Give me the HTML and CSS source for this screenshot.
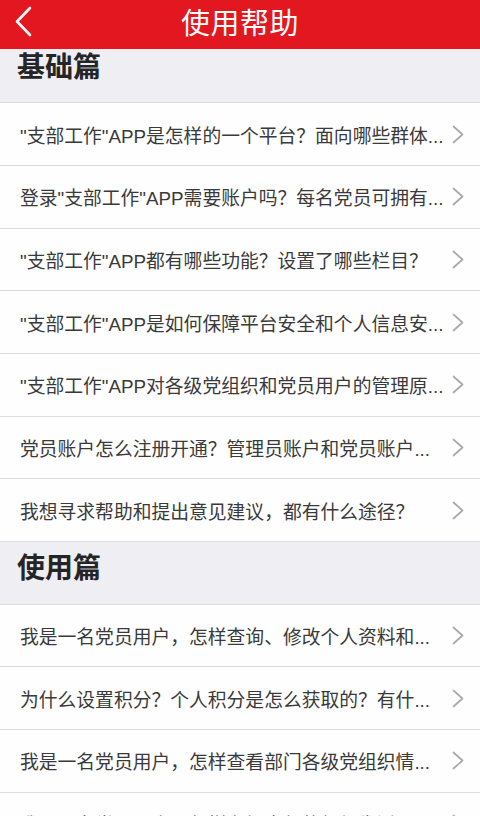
FILE: index.html
```html
<!DOCTYPE html>
<html lang="zh-CN">
<head>
<meta charset="utf-8">
<title>使用帮助</title>
<link rel="stylesheet" href="styles.css">
</head>
<body>
<div class="app">
  <header class="navbar">
    <button class="back" aria-label="返回">
      <svg width="20" height="32" viewBox="0 0 20 32"><polyline points="16,2 3,15.5 16,29" fill="none" stroke="#fff" stroke-width="2.6" stroke-linecap="round" stroke-linejoin="round"/></svg>
    </button>
    <h1 class="title">使用帮助</h1>
  </header>
  <main class="viewport">
    <div class="list">
      <div class="section">基础篇</div>
      <div class="row"><span class="text">"支部工作"APP是怎样的一个平台？面向哪些群体...</span><svg class="chev" width="12" height="19" viewBox="0 0 12 19"><polyline points="1.5,1.5 10.5,9.5 1.5,17.5" fill="none" stroke="#a9a9ad" stroke-width="1.7" stroke-linecap="round" stroke-linejoin="round"/></svg></div>
      <div class="row"><span class="text">登录"支部工作"APP需要账户吗？每名党员可拥有...</span><svg class="chev" width="12" height="19" viewBox="0 0 12 19"><polyline points="1.5,1.5 10.5,9.5 1.5,17.5" fill="none" stroke="#a9a9ad" stroke-width="1.7" stroke-linecap="round" stroke-linejoin="round"/></svg></div>
      <div class="row"><span class="text">"支部工作"APP都有哪些功能？设置了哪些栏目？</span><svg class="chev" width="12" height="19" viewBox="0 0 12 19"><polyline points="1.5,1.5 10.5,9.5 1.5,17.5" fill="none" stroke="#a9a9ad" stroke-width="1.7" stroke-linecap="round" stroke-linejoin="round"/></svg></div>
      <div class="row"><span class="text">"支部工作"APP是如何保障平台安全和个人信息安...</span><svg class="chev" width="12" height="19" viewBox="0 0 12 19"><polyline points="1.5,1.5 10.5,9.5 1.5,17.5" fill="none" stroke="#a9a9ad" stroke-width="1.7" stroke-linecap="round" stroke-linejoin="round"/></svg></div>
      <div class="row"><span class="text">"支部工作"APP对各级党组织和党员用户的管理原...</span><svg class="chev" width="12" height="19" viewBox="0 0 12 19"><polyline points="1.5,1.5 10.5,9.5 1.5,17.5" fill="none" stroke="#a9a9ad" stroke-width="1.7" stroke-linecap="round" stroke-linejoin="round"/></svg></div>
      <div class="row"><span class="text">党员账户怎么注册开通？管理员账户和党员账户...</span><svg class="chev" width="12" height="19" viewBox="0 0 12 19"><polyline points="1.5,1.5 10.5,9.5 1.5,17.5" fill="none" stroke="#a9a9ad" stroke-width="1.7" stroke-linecap="round" stroke-linejoin="round"/></svg></div>
      <div class="row"><span class="text">我想寻求帮助和提出意见建议，都有什么途径？</span><svg class="chev" width="12" height="19" viewBox="0 0 12 19"><polyline points="1.5,1.5 10.5,9.5 1.5,17.5" fill="none" stroke="#a9a9ad" stroke-width="1.7" stroke-linecap="round" stroke-linejoin="round"/></svg></div>
      <div class="section">使用篇</div>
      <div class="row"><span class="text">我是一名党员用户，怎样查询、修改个人资料和...</span><svg class="chev" width="12" height="19" viewBox="0 0 12 19"><polyline points="1.5,1.5 10.5,9.5 1.5,17.5" fill="none" stroke="#a9a9ad" stroke-width="1.7" stroke-linecap="round" stroke-linejoin="round"/></svg></div>
      <div class="row"><span class="text">为什么设置积分？个人积分是怎么获取的？有什...</span><svg class="chev" width="12" height="19" viewBox="0 0 12 19"><polyline points="1.5,1.5 10.5,9.5 1.5,17.5" fill="none" stroke="#a9a9ad" stroke-width="1.7" stroke-linecap="round" stroke-linejoin="round"/></svg></div>
      <div class="row"><span class="text">我是一名党员用户，怎样查看部门各级党组织情...</span><svg class="chev" width="12" height="19" viewBox="0 0 12 19"><polyline points="1.5,1.5 10.5,9.5 1.5,17.5" fill="none" stroke="#a9a9ad" stroke-width="1.7" stroke-linecap="round" stroke-linejoin="round"/></svg></div>
      <div class="row"><span class="text">我是一名党员用户，怎样参加支部的组织生活...</span><svg class="chev" width="12" height="19" viewBox="0 0 12 19"><polyline points="1.5,1.5 10.5,9.5 1.5,17.5" fill="none" stroke="#a9a9ad" stroke-width="1.7" stroke-linecap="round" stroke-linejoin="round"/></svg></div>
    </div>
  </main>
</div>
</body>
</html>
```
FILE: styles.css
```css
* { box-sizing: border-box; }
html, body {
  margin: 0;
  padding: 0;
  width: 480px;
  height: 816px;
  overflow: hidden;
  background: #fefefe;
  font-family: "Liberation Sans", "Noto Sans CJK SC", sans-serif;
}
.app {
  display: flex;
  flex-direction: column;
  height: 816px;
}
.navbar {
  flex: none;
  height: 49.33px;
  background: #e3171f;
  display: flex;
  align-items: center;
  justify-content: center;
  padding-bottom: 6px;
  position: relative;
  z-index: 1;
}
.back {
  position: absolute;
  left: 14px;
  top: 5.5px;
  width: 20px;
  height: 32px;
  padding: 0;
  margin: 0;
  border: 0;
  background: none;
  display: block;
}
.back svg { display: block; }
.title {
  margin: 0;
  color: #fff;
  font-family: "Noto Sans CJK SC", sans-serif;
  font-weight: 400;
  font-size: 29px;
  line-height: 1;
  letter-spacing: 0.5px;
}
.viewport {
  flex: 1;
  overflow: hidden;
}
.list {
  margin-top: -8.67px;
}
.section {
  height: 62.667px;
  background: #efeef3;
  border-bottom: 1px solid #dcdbe0;
  display: flex;
  align-items: center;
  padding: 0 0 12px 17px;
  font-family: "Noto Sans CJK SC", sans-serif;
  font-weight: 700;
  font-size: 28px;
  line-height: 1.2;
  color: #252525;
}
.row {
  height: 62.667px;
  background: #fefefe;
  border-bottom: 1px solid #dcdbe0;
  display: flex;
  align-items: center;
  padding: 0 16.5px 0 20px;
}
.text {
  flex: 1;
  min-width: 0;
  white-space: nowrap;
  overflow: hidden;
  text-overflow: ellipsis;
  font-family: "Liberation Sans", "Noto Sans CJK SC", sans-serif;
  font-size: 18.8px;
  color: #3a3a3a;
}
.chev {
  flex: none;
  display: block;
  margin-left: 2px;
}
```
